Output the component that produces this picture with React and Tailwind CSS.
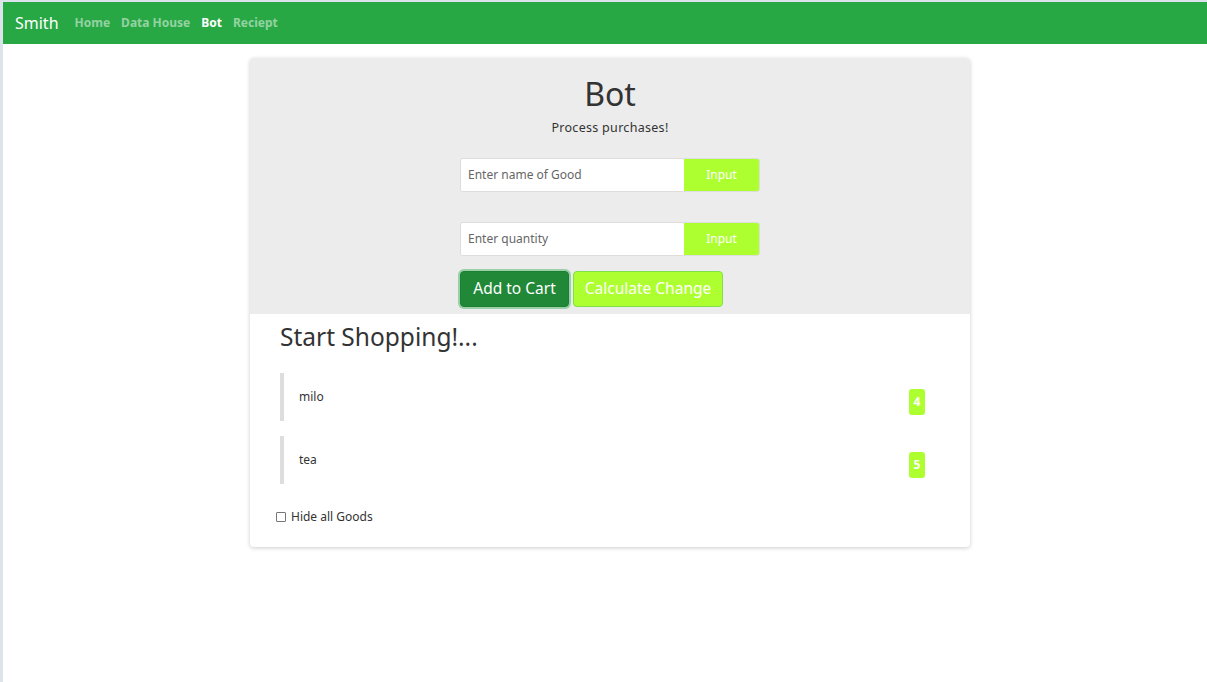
export default function App() {
  const goods = [
    { name: "milo", qty: 4 },
    { name: "tea", qty: 5 },
  ];

  return (
    <div
      className="min-h-[682px] bg-white border-l-[3px] border-t-2 border-[#dde3ec] text-[#333]"
      style={{ fontFamily: '"Noto Sans", "DejaVu Sans", sans-serif' }}
    >
      <nav className="h-[42px] bg-[#28a745] flex items-center px-3">
        <span className="text-white text-[16px] mr-[16px]">Smith</span>
        <div className="flex gap-[11px] text-[12px] font-bold">
          <span className="text-white/50">Home</span>
          <span className="text-white/50">Data House</span>
          <span className="text-white">Bot</span>
          <span className="text-white/50">Reciept</span>
        </div>
      </nav>

      <main className="flex justify-center pt-[14px] pl-[10px]">
        <div className="w-[720px] rounded bg-white shadow-[0_1px_4px_rgba(0,0,0,0.2)] overflow-hidden">
          <section className="bg-[#ececec] flex flex-col items-center pt-[16px] pb-[7px]">
            <h1 className="text-[32px] leading-[40px] text-[#333]">Bot</h1>
            <p className="text-[12.5px] tracking-[0.3px] mt-[5px] text-[#333]">Process purchases!</p>

            <div className="mt-[20px] flex w-[300px] h-[34px] rounded-[3px] border border-[#ddd] overflow-hidden">
              <input
                className="flex-1 bg-white px-[7px] text-[12px] outline-none placeholder:text-[#666]"
                placeholder="Enter name of Good"
              />
              <button className="w-[75px] bg-[#adff2f] text-white text-[12px]">Input</button>
            </div>

            <div className="mt-[30px] flex w-[300px] h-[34px] rounded-[3px] border border-[#ddd] overflow-hidden">
              <input
                className="flex-1 bg-white px-[7px] text-[12px] outline-none placeholder:text-[#666]"
                placeholder="Enter quantity"
              />
              <button className="w-[75px] bg-[#adff2f] text-white text-[12px]">Input</button>
            </div>

            <div className="mt-[15px] flex gap-[4px] w-[300px]">
              <button className="h-[36px] w-[109px] rounded-[4px] bg-[#218838] border border-[#1e7e34] text-white text-[15.5px] shadow-[0_0_0_2px_rgba(72,180,97,0.5)]">
                Add to Cart
              </button>
              <button className="h-[36px] w-[150px] rounded-[4px] bg-[#adff2f] border border-[#7ee04a] text-white text-[15.5px]">
                Calculate Change
              </button>
            </div>
          </section>

          <section className="px-[30px] pt-[8px] pb-[21px]">
            <h2 className="text-[24.5px] leading-[30px] text-[#333]">Start Shopping!...</h2>
            <ul className="mt-[21px] flex flex-col gap-[15px] pr-[15px]">
              {goods.map((g) => (
                <li
                  key={g.name}
                  className="h-[48px] border-l-4 border-[#ddd] pl-[15px] flex items-center justify-between"
                >
                  <span className="text-[12px] text-[#333]">{g.name}</span>
                  <span className="mt-[10px] w-[16px] h-[26px] rounded-[3px] bg-[#adff2f] text-white text-[12px] font-bold flex items-center justify-center">
                    {g.qty}
                  </span>
                </li>
              ))}
            </ul>
            <label className="mt-[24px] -ml-[4px] flex items-center gap-[5px] text-[12px] text-[#333]">
              <span className="w-[10px] h-[10px] border border-[#777] rounded-[1px] bg-white" />
              Hide all Goods
            </label>
          </section>
        </div>
      </main>
    </div>
  );
}
